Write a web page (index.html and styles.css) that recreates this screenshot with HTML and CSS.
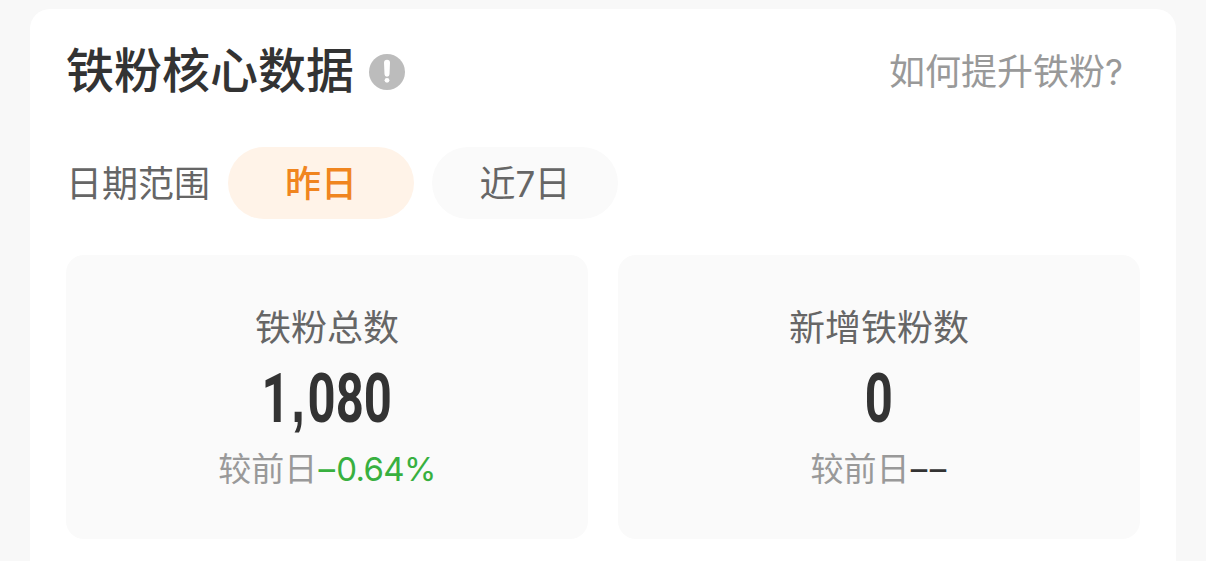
FILE: index.html
```html
<!DOCTYPE html>
<html lang="zh-CN">
<head>
    <meta charset="UTF-8">
    <meta name="viewport" content="width=device-width, initial-scale=1.0">
    <title>铁粉核心数据</title>
    <link rel="stylesheet" href="styles.css">
</head>
<body>
    <div class="panel">
        <div class="panel-header">
            <h1>铁粉核心数据</h1>
            <svg class="info-icon" viewBox="0 0 36 36">
                <circle cx="18" cy="18" r="18" fill="#bcbcbc"/>
                <path d="M15 8.8a3 3 0 0 1 6 0l-.5 11.4a2.4 2.4 0 0 1-5 0z" fill="#fff"/>
                <circle cx="18" cy="26.3" r="2.4" fill="#fff"/>
            </svg>
            <a class="help-link">如何提升铁粉<span class="question">?</span></a>
        </div>

        <div class="date-range">
            <span class="range-label">日期范围</span>
            <button class="range-button active">昨日</button>
            <button class="range-button">近<span class="digit">7</span>日</button>
        </div>

        <div class="cards">
            <div class="card">
                <div class="card-title">铁粉总数</div>
                <div class="card-value"><span class="number">1<span class="comma">,</span>080</span></div>
                <div class="card-compare">较前日<span class="down"><span class="dash">–</span>0.64%</span></div>
            </div>
            <div class="card">
                <div class="card-title">新增铁粉数</div>
                <div class="card-value"><span class="number">0</span></div>
                <div class="card-compare">较前日<span class="empty"><span class="dash">–</span><span class="dash">–</span></span></div>
            </div>
        </div>
    </div>
</body>
</html>
```

FILE: styles.css
```css
* {
    box-sizing: border-box;
}
body {
    margin: 0;
    padding: 9px 30px 0;
    background-color: #f8f8f8;
    font-family: Inter, "Noto Sans CJK SC", sans-serif;
    color: #333;
}
.panel {
    height: 552px;
    padding: 32px 36px 0;
    border-radius: 20px 20px 0 0;
    background-color: #fff;
}
.panel-header {
    display: flex;
    align-items: center;
    height: 62px;
}
h1 {
    margin: 0;
    padding-bottom: 2px;
    font-size: 48px;
    font-weight: 500;
    line-height: 60px;
}
.info-icon {
    width: 36px;
    height: 36px;
    margin-left: 15px;
}
.help-link {
    margin-left: auto;
    margin-right: 18px;
    font-size: 36px;
    line-height: 62px;
    color: #999;
}
.question {
    font-size: 35px;
    letter-spacing: -1px;
}
.date-range {
    display: flex;
    align-items: center;
    gap: 18px;
    margin-top: 44px;
    font-size: 36px;
    color: #666;
}
.range-label {
    width: 144px;
    padding-bottom: 4px;
}
.range-button {
    width: 186px;
    height: 72px;
    padding: 0 0 4px;
    border: none;
    border-radius: 36px;
    background-color: #fafafa;
    font-family: inherit;
    font-size: 36px;
    color: #666;
}
.range-button.active {
    background-color: #fff3e8;
    font-weight: 500;
    color: #f0851f;
}
.digit {
    font-size: 35px;
    letter-spacing: -1px;
}
.cards {
    display: flex;
    gap: 30px;
    margin-top: 36px;
}
.card {
    flex: 1;
    height: 284px;
    padding-top: 49px;
    border-radius: 18px;
    background-color: #fafafa;
    text-align: center;
}
.card-title {
    font-size: 36px;
    line-height: 48px;
    color: #666;
}
.card-value {
    height: 89px;
    padding-top: 2px;
    font-family: Roboto, sans-serif;
    font-size: 69px;
    font-weight: 700;
    line-height: 89px;
}
.number {
    display: inline-block;
    transform: scaleX(0.71);
}
.comma {
    margin: 0 4px 0 2px;
    font-family: "Liberation Sans", sans-serif;
    font-weight: bold;
}
.card-compare {
    font-size: 33px;
    line-height: 56px;
    color: #999;
}
.down {
    letter-spacing: -0.7px;
    color: #38b03f;
}
.empty {
    color: #333;
}
.dash {
    display: inline-block;
    width: 19px;
    letter-spacing: 0;
    text-align: center;
}
```
